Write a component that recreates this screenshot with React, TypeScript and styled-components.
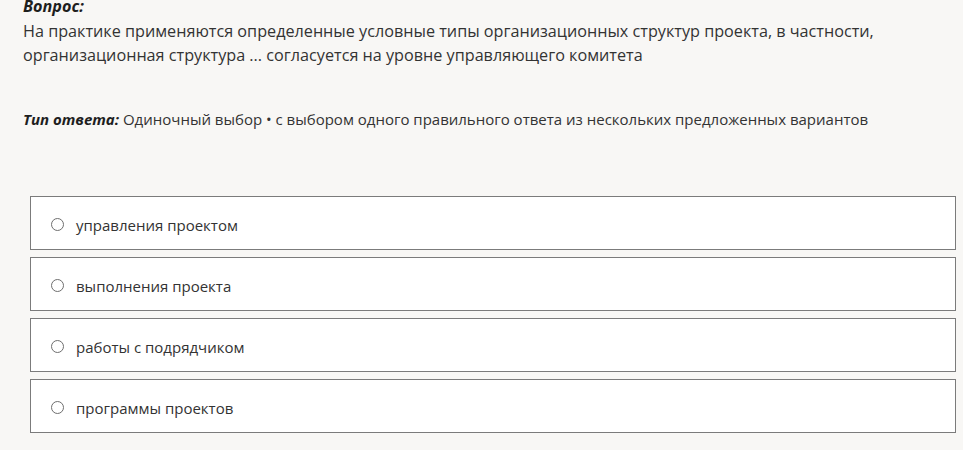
import { FC } from "react";
import styled, { createGlobalStyle } from "styled-components";

const GlobalStyle = createGlobalStyle`
	html, body {
		margin: 0;
		padding: 0;
		background-color: #f8f7f5;
	}

	body {
		font-family: "Open Sans", "Noto Sans", sans-serif;
		color: #333333;
	}
`;

const Page = styled.div`
	height: 450px;
	overflow: hidden;
	padding: 0 7px 0 23px;
`;

const QuestionBlock = styled.section`
	margin-top: -6px;
	font-size: 16.2px;
	line-height: 24.5px;
`;

const Label = styled.span`
	font-weight: 700;
	font-style: italic;
	color: #1e1e1e;
`;

const QuestionText = styled.div`
	display: block;
`;

const AnswerType = styled.div`
	margin-top: 39.5px;
	font-size: 15px;
	line-height: 24.5px;
`;

const Options = styled.ul`
	list-style: none;
	margin: 64.5px 0 0 7px;
	padding: 0;
	display: flex;
	flex-direction: column;
	gap: 7px;
`;

const Option = styled.li`
	height: 54px;
	box-sizing: border-box;
	border: 1px solid #7b7b7b;
	background-color: #ffffff;
	padding: 3px 0 0 20px;
	display: flex;
	align-items: center;
	gap: 12px;
	font-size: 15px;
`;

const Radio = styled.span`
	width: 13px;
	height: 13px;
	box-sizing: border-box;
	border: 1.7px solid #6e6e6e;
	border-radius: 50%;
	flex-shrink: 0;
`;

const OPTIONS = [
	"управления проектом",
	"выполнения проекта",
	"работы с подрядчиком",
	"программы проектов",
];

const App: FC = () => {
	return (
		<>
			<GlobalStyle />
			<Page>
				<QuestionBlock>
					<Label>Вопрос:</Label>
					<QuestionText>
						На практике применяются определенные условные типы организационных структур проекта, в частности,
						<br />
						организационная структура ... согласуется на уровне управляющего комитета
					</QuestionText>
				</QuestionBlock>
				<AnswerType>
					<Label>Тип ответа:</Label> Одиночный выбор • с выбором одного правильного ответа из нескольких предложенных вариантов
				</AnswerType>
				<Options>
					{OPTIONS.map(text => (
						<Option key={text}>
							<Radio />
							{text}
						</Option>
					))}
				</Options>
			</Page>
		</>
	);
};

export default App;
